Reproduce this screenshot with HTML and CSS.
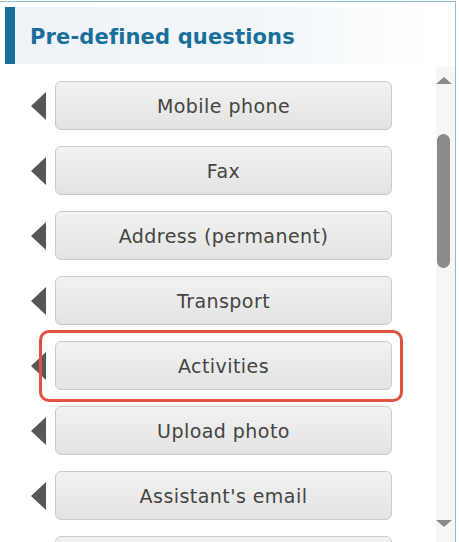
FILE: index.html
```html
<!DOCTYPE html>
<html>
<head>
<meta charset="utf-8">
<link rel="stylesheet" href="styles.css">
</head>
<body>
<div class="panel">
  <div class="header">
    <div class="header-bar"></div>
    <h1 class="title">Pre-defined questions</h1>
  </div>
  <div class="body">
    <div class="list">
      <div class="row"><span class="tri"></span><button class="q">Mobile phone</button></div>
      <div class="row"><span class="tri"></span><button class="q">Fax</button></div>
      <div class="row"><span class="tri"></span><button class="q">Address (permanent)</button></div>
      <div class="row"><span class="tri"></span><button class="q">Transport</button></div>
      <div class="row highlighted"><span class="tri"></span><button class="q">Activities</button><span class="hl"></span></div>
      <div class="row"><span class="tri"></span><button class="q">Upload photo</button></div>
      <div class="row"><span class="tri"></span><button class="q">Assistant's email</button></div>
      <div class="row"><span class="tri"></span><button class="q"></button></div>
    </div>
    <div class="scrollbar">
      <span class="arrow up"></span>
      <div class="track"><span class="thumb"></span></div>
      <span class="arrow down"></span>
    </div>
  </div>
</div>
</body>
</html>
```
FILE: styles.css
```css
html, body {
  margin: 0;
  padding: 0;
  background: #ffffff;
  overflow: hidden;
}
body {
  width: 459px;
  height: 542px;
  font-family: "DejaVu Sans", Verdana, sans-serif;
}
.panel {
  margin-top: 1px;
  width: 456px;
  height: 541px;
  box-sizing: border-box;
  border-top: 1px solid #8dbcdb;
  border-right: 1px solid #8dbcdb;
  display: flex;
  flex-direction: column;
  overflow: hidden;
}
.header {
  margin: 5px 15px 0 5px;
  height: 57px;
  display: flex;
  align-items: center;
  background: linear-gradient(to right, #edf3f7 0%, #f3f7fa 60%, #ffffff 100%);
  flex-shrink: 0;
}
.header-bar {
  width: 10px;
  align-self: stretch;
  background: #17709b;
}
.title {
  margin: 2px 0 0 15px;
  font-size: 21px;
  font-weight: bold;
  color: #1a6f9a;
  letter-spacing: 0.15px;
}
.body {
  flex: 1;
  display: flex;
  min-height: 0;
}
.list {
  flex: 1;
  padding: 17px 0 0 31px;
  display: flex;
  flex-direction: column;
  gap: 16px;
  overflow: hidden;
}
.row {
  position: relative;
  display: flex;
  align-items: center;
  flex-shrink: 0;
}
.tri {
  width: 0;
  height: 0;
  border-top: 14px solid transparent;
  border-bottom: 14px solid transparent;
  border-right: 15px solid #575757;
  margin-right: 9px;
}
.q {
  width: 337px;
  height: 49px;
  box-sizing: border-box;
  border: 1px solid #cbcbcb;
  border-radius: 6px;
  background: linear-gradient(to bottom, #f2f2f2 0%, #e3e3e3 100%);
  font-family: "DejaVu Sans", Verdana, sans-serif;
  font-size: 19px;
  letter-spacing: 0.45px;
  color: #444444;
  padding: 1px 0 0 0;
  text-align: center;
}
.hl {
  position: absolute;
  left: 8px;
  top: -11px;
  width: 364px;
  height: 72px;
  box-sizing: border-box;
  border: 3px solid #e2513f;
  border-radius: 10px;
  pointer-events: none;
}
.scrollbar {
  width: 19px;
  margin-top: 3px;
  background: #f6f6f6;
  display: flex;
  flex-direction: column;
  align-items: center;
}
.arrow {
  width: 0;
  height: 0;
  border-left: 8px solid transparent;
  border-right: 8px solid transparent;
  margin-right: 3px;
}
.arrow.up {
  margin-top: 10px;
  border-bottom: 7px solid #8a8a8a;
}
.arrow.down {
  margin-bottom: 15px;
  border-top: 7px solid #8a8a8a;
}
.track {
  flex: 1;
  width: 100%;
  display: flex;
  justify-content: center;
}
.thumb {
  margin-top: 50px;
  margin-right: 4px;
  width: 13px;
  height: 134px;
  border-radius: 7px;
  background: #8b8b8b;
}
```
